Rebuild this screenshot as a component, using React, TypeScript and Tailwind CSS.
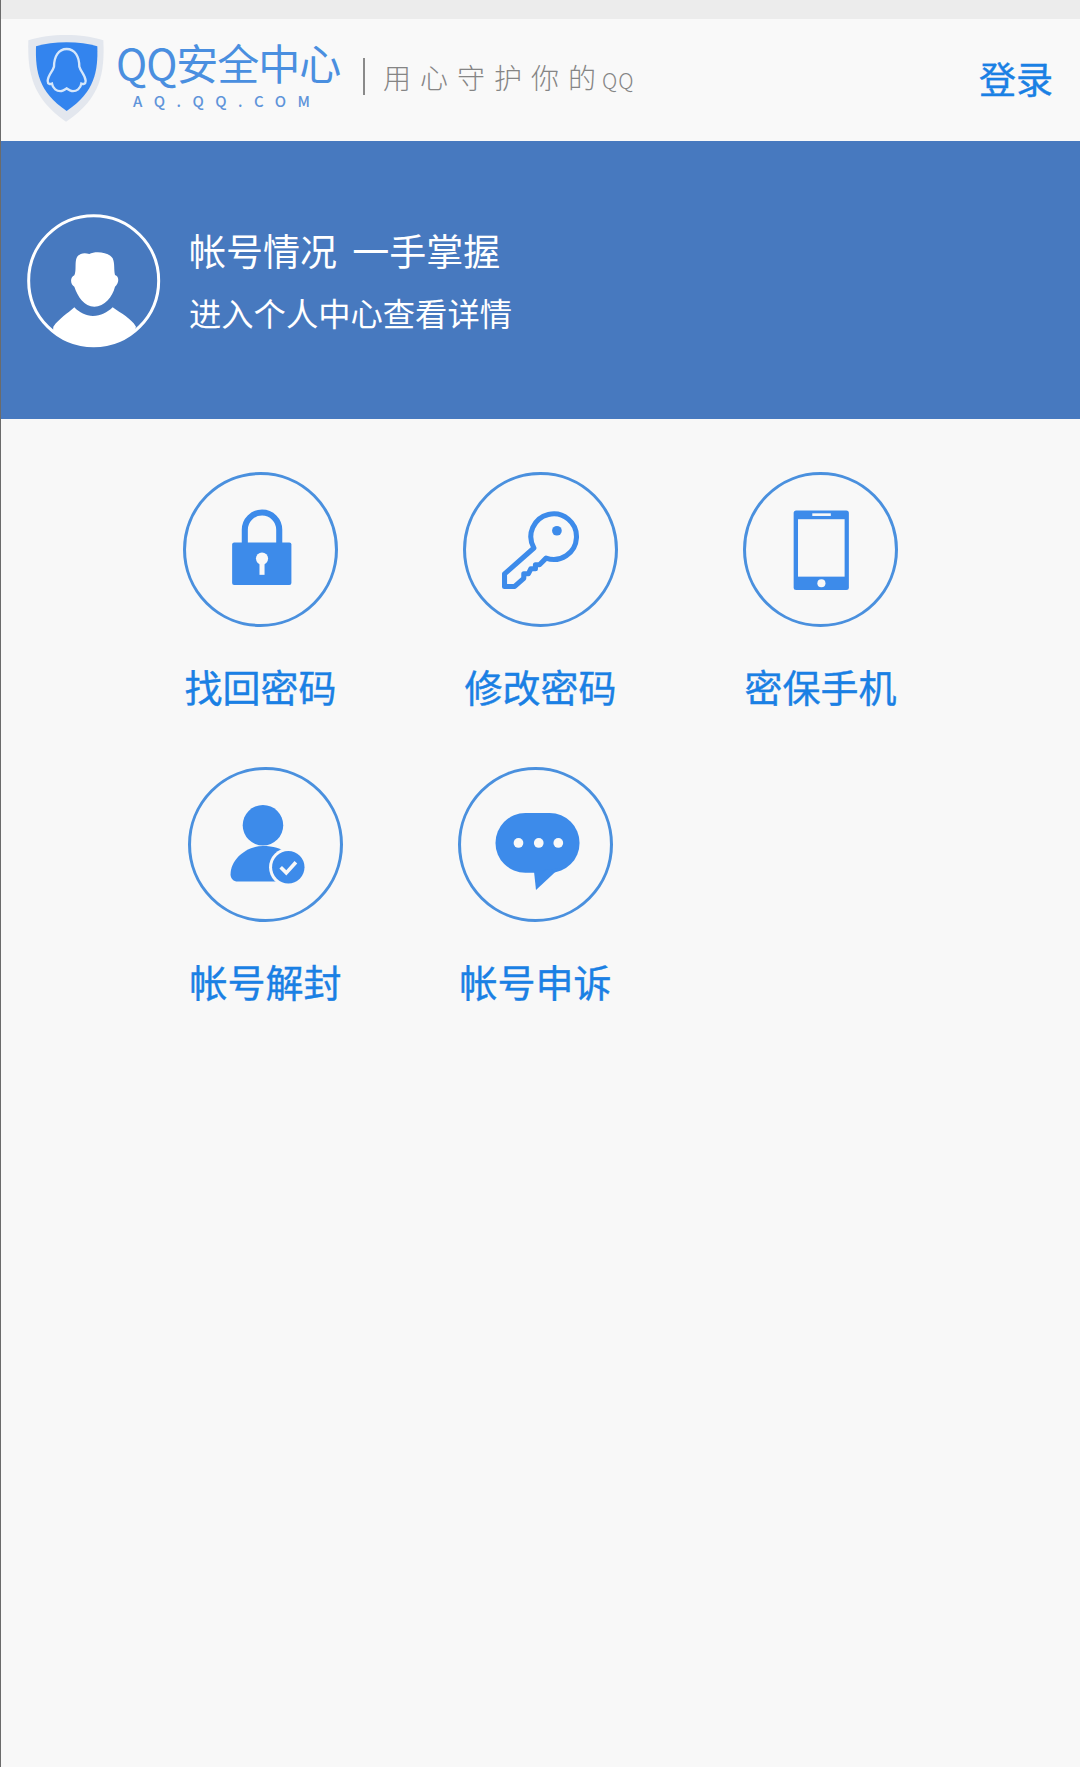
const circleIcon = "w-[155px] h-[155px] text-[#3d8bea]";

const Ring = () => <circle cx="76.5" cy="76.5" r="75" fill="none" stroke="#4a90de" strokeWidth="3" />;

const LockIcon = () => (
  <svg viewBox="0 0 153 153" className={circleIcon}>
    <Ring />
    <path d="M61 72V57a17 17 0 0 1 34 0v15" fill="none" stroke="currentColor" strokeWidth="6" />
    <rect x="48.5" y="69.5" width="58.5" height="42" rx="2" fill="currentColor" />
    <circle cx="78" cy="85.5" r="6" fill="#f8f8f8" />
    <rect x="75.5" y="86" width="5" height="15.5" fill="#f8f8f8" />
  </svg>
);

const KeyIcon = () => (
  <svg viewBox="0 0 153 153" className={circleIcon}>
    <Ring />
    <path
      d="M70 75L41 100.500V113H51L60 105V100.500H64.500L67 95.500H71.500V91.500H75.500L82 85A22.500 22.500 0 1 0 70 75Z"
      fill="none"
      stroke="currentColor"
      strokeWidth="5"
      strokeLinejoin="round"
    />
    <circle cx="92.700" cy="58" r="4.800" fill="currentColor" />
  </svg>
);

const PhoneIcon = () => (
  <svg viewBox="0 0 153 153" className={circleIcon}>
    <Ring />
    <rect x="50" y="38" width="54.500" height="78.500" rx="2.500" fill="currentColor" />
    <rect x="54.300" y="46.600" width="46" height="56.700" fill="#f8f8f8" />
    <rect x="68.400" y="40.800" width="18.300" height="2.600" fill="#f8f8f8" />
    <circle cx="77.400" cy="109.800" r="4" fill="#f8f8f8" />
  </svg>
);

const UserCheckIcon = () => (
  <svg viewBox="0 0 153 153" className={circleIcon}>
    <Ring />
    <circle cx="74" cy="57.500" r="20" fill="currentColor" />
    <path d="M42 106C42 91 58 78 74 78C84 78 92 80 98 86V113H49C45 113 42 110 42 106Z" fill="currentColor" />
    <circle cx="99" cy="99" r="19" fill="#f8f8f8" />
    <circle cx="99" cy="99" r="16" fill="currentColor" />
    <path d="M91.500 99L97 104.500L106.500 94" fill="none" stroke="#f8f8f8" strokeWidth="3.600" />
  </svg>
);

const ChatIcon = () => (
  <svg viewBox="0 0 153 153" className={circleIcon}>
    <Ring />
    <rect x="37" y="45.500" width="83" height="59" rx="29.500" fill="currentColor" />
    <path d="M75 103L77 121.500L100 100Z" fill="currentColor" />
    <circle cx="59.700" cy="75" r="4.800" fill="#f8f8f8" />
    <circle cx="79.700" cy="75" r="4.800" fill="#f8f8f8" />
    <circle cx="99" cy="75" r="4.800" fill="#f8f8f8" />
  </svg>
);

const Shield = () => (
  <svg viewBox="0 0 300 315" className="w-[100px] h-[105px] shrink-0 mt-[-5px]">
    <path
      d="M138 30C180 30 215 35 250 46C254 140 245 220 138 290C35 220 22 140 25 46C60 35 95 30 138 30Z"
      fill="#e3e7ee"
    />
    <path
      d="M140 52C175 52 205 56 232 64C234 140 225 200 140 258C55 200 46 140 48 64C75 56 105 52 140 52Z"
      fill="#3384ee"
    />
    <path
      d="M140 72C165 72 178 95 178 125C182 140 196 150 197 168C197 178 188 178 184 176C182 190 170 200 155 198C148 197 144 192 140 190C136 192 132 197 125 198C110 200 98 190 96 176C92 178 83 178 83 168C84 150 98 140 102 125C102 95 115 72 140 72Z"
      fill="none"
      stroke="#d6e7fb"
      strokeWidth="7"
    />
  </svg>
);

const Avatar = () => (
  <svg viewBox="0 0 435 435" className="w-[145px] h-[145px] shrink-0 mt-[5px]">
    <circle cx="218" cy="212" r="195" fill="none" stroke="#fff" strokeWidth="9" />
    <path
      d="M165 150C168 133 185 125 205 132C222 123 262 125 275 145C282 160 278 178 282 195C295 198 295 220 282 230C275 260 250 290 220 290C190 290 170 260 160 230C148 223 146 203 160 196C166 183 162 165 165 150Z"
      fill="#fff"
    />
    <path
      d="M97 350C115 325 140 310 160 292C175 308 195 318 216 318C240 318 258 308 275 292C300 310 330 325 345 350L340 364A195 195 0 0 1 96 364Z"
      fill="#fff"
    />
  </svg>
);

const Entry = ({ icon, label }: { icon: React.ReactNode; label: string }) => (
  <a className="flex flex-col items-center w-[155px]">
    {icon}
    <span className="mt-[31px] text-[38px] leading-[56px] [-webkit-text-stroke:0.4px] whitespace-nowrap text-[#1a80e4]">
      {label}
    </span>
  </a>
);

export default function App() {
  return (
    <div className="w-[1080px] h-[1767px] overflow-hidden border-l border-[#6b6b6b] bg-[#f8f8f8] font-['Noto_Sans_CJK_SC',sans-serif]">
      <div className="h-[19px] bg-[#ececec]" />

      <header className="h-[122px] pl-[19px] pr-[27px] flex items-center bg-[#f9f9f9]">
        <Shield />
        <div className="ml-[-4px] mt-[-11px] w-[228px]">
          <div className="text-[42px] leading-[46px] tracking-[-1px] whitespace-nowrap text-[#4a8fe0]">QQ安全中心</div>
          <div className="mt-[7px] pl-[17px] text-[15px] leading-[18px] font-medium tracking-[11.500px] whitespace-nowrap text-[#5f94da]">
            AQ.QQ.COM
          </div>
        </div>
        <div className="ml-[19px] mt-[-7px] w-[2px] h-[37px] bg-[#8a8a8a]" />
        <div className="ml-[18px] mt-[-6px] font-light text-[#858585] whitespace-nowrap">
          <span className="text-[28px] tracking-[9px]">用心守护你</span>
          <span className="text-[28px]">的</span>
          <span className="text-[21px] tracking-[1px] ml-[6px]">QQ</span>
        </div>
        <a className="ml-auto mt-[-4px] text-[37px] leading-none [-webkit-text-stroke:0.4px] text-[#1a80e4]">登录</a>
      </header>

      <section className="h-[278px] pl-[20px] flex items-center gap-[23px] bg-[#4779bf]">
        <Avatar />
        <div className="text-white">
          <div className="text-[37px] leading-[50px] whitespace-nowrap [word-spacing:7px]">帐号情况 一手掌握</div>
          <div className="mt-[14px] text-[32.300px] leading-[46px] whitespace-nowrap">进入个人中心查看详情</div>
        </div>
      </section>

      <main className="pt-[53px]">
        <div className="flex pl-[182px] gap-[125px]">
          <Entry icon={<LockIcon />} label="找回密码" />
          <Entry icon={<KeyIcon />} label="修改密码" />
          <Entry icon={<PhoneIcon />} label="密保手机" />
        </div>
        <div className="flex mt-[53px] pl-[187px] gap-[115px]">
          <Entry icon={<UserCheckIcon />} label="帐号解封" />
          <Entry icon={<ChatIcon />} label="帐号申诉" />
        </div>
      </main>
    </div>
  );
}
